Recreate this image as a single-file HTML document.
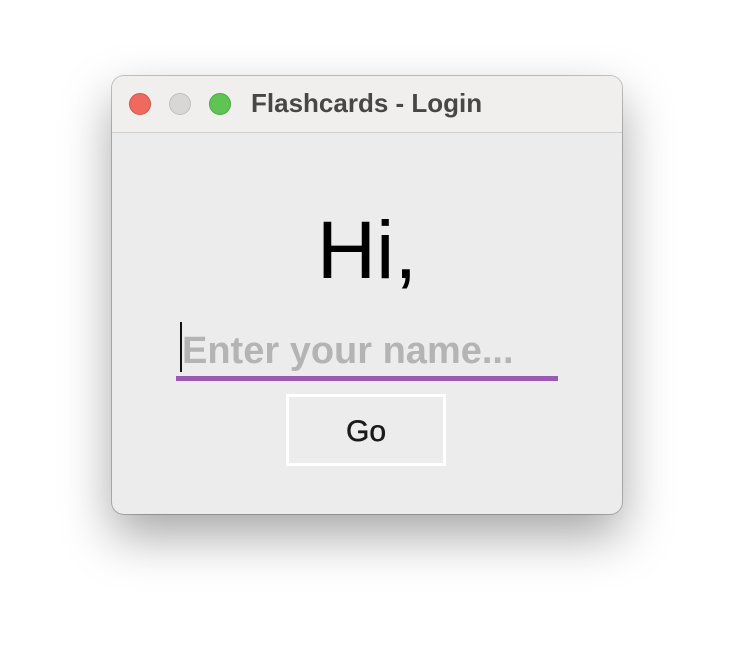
<!DOCTYPE html>
<html><head><style>
body{margin:0;width:734px;height:662px;background:#fff;position:relative;overflow:hidden;font-family:"Liberation Sans",sans-serif}
.win{position:absolute;left:112px;top:76px;width:510px;height:438px;border-radius:12px;background:#ececec;box-shadow:0 22px 50px rgba(0,0,0,0.35),0 0 0 1px rgba(0,0,0,0.22);overflow:hidden}
.tb{position:absolute;left:0;top:0;width:100%;height:56px;background:#f0efed;border-bottom:1px solid #cfcfcf}
.dot{position:absolute;top:17px;width:22px;height:22px;border-radius:50%;box-sizing:border-box}
.t{position:absolute;left:139px;top:12px;font-weight:bold;font-size:26px;color:#474747}
.hi{position:absolute;left:0;width:100%;top:134px;text-align:center;font-size:82px;color:#000;line-height:1}
.ph{position:absolute;left:70px;top:256px;font-size:38px;font-weight:bold;color:#b4b4b4;line-height:1;letter-spacing:0px}
.cur{position:absolute;left:68px;top:246px;width:2px;height:50px;background:#111}
.ul{position:absolute;left:64px;top:300px;width:382px;height:5px;background:#9b59b6}
.btn{position:absolute;left:174px;top:318px;width:160px;height:72px;box-sizing:border-box;border:3px solid #fff;text-align:center;line-height:70px;font-size:30px;color:#1a1a1a;-webkit-text-stroke:0.5px #1a1a1a}
</style></head><body>
<div class="win">
<div class="tb">
<div class="dot" style="left:17px;background:#ee6a5f;border:1px solid #d4534a"></div>
<div class="dot" style="left:57px;background:#d8d7d5;border:1px solid #c0bfbd"></div>
<div class="dot" style="left:97px;background:#5fc453;border:1px solid #4aa93f"></div>
<div class="t">Flashcards - Login</div>
</div>
<div class="hi">Hi,</div>
<div class="cur"></div>
<div class="ph">Enter your name...</div>
<div class="ul"></div>
<div class="btn">Go</div>
</div>
</body></html>
